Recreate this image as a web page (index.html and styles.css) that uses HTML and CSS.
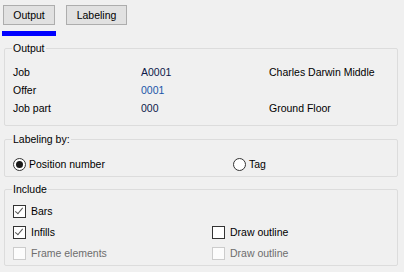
FILE: index.html
```html
<!DOCTYPE html>
<html lang="en">
<head>
    <meta charset="UTF-8">
    <title>Output settings</title>
    <link rel="stylesheet" href="styles.css">
</head>
<body>

    <div class="tabs">
        <div class="tab-item">
            <button class="tab-btn">Output</button>
            <div class="tab-mark"></div>
        </div>
        <div class="tab-item">
            <button class="tab-btn labeling">Labeling</button>
        </div>
    </div>

    <fieldset class="group group-output">
        <legend>Output</legend>
        <div class="info-grid">
            <span>Job</span><span class="value">A0001</span><span>Charles Darwin Middle</span>
            <span>Offer</span><span class="value link">0001</span><span></span>
            <span>Job part</span><span class="value">000</span><span>Ground Floor</span>
        </div>
    </fieldset>

    <fieldset class="group group-labeling">
        <legend>Labeling by:</legend>
        <div class="option-grid">
            <label class="option"><span class="radio checked"></span>Position number</label>
            <label class="option"><span class="radio"></span>Tag</label>
        </div>
    </fieldset>

    <fieldset class="group group-include">
        <legend>Include</legend>
        <div class="option-grid include-grid">
            <label class="option"><span class="check checked"></span>Bars</label>
            <span></span>
            <label class="option"><span class="check checked"></span>Infills</label>
            <label class="option"><span class="check"></span>Draw outline</label>
            <label class="option disabled"><span class="check"></span>Frame elements</label>
            <label class="option disabled"><span class="check"></span>Draw outline</label>
        </div>
    </fieldset>

</body>
</html>
```

FILE: styles.css
```css
body {
    margin: 0;
    background-color: #f0f0f0;
    font-family: "Liberation Sans", Arial, sans-serif;
    font-size: 10.5px;
    color: #000;
    width: 404px;
    height: 272px;
    overflow: hidden;
}

.tabs {
    display: flex;
    gap: 10px;
    padding: 5px 0 0 3px;
    height: 42px;
    box-sizing: border-box;
}

.tab-item {
    display: flex;
    flex-direction: column;
}

.tab-btn {
    height: 20px;
    width: 52px;
    padding: 0;
    margin: 0;
    background-color: #e1e1e1;
    border: 1px solid #adadad;
    font-family: inherit;
    font-size: 10.5px;
    color: #000;
}

.tab-btn.labeling {
    width: 61px;
}

.tab-mark {
    height: 5px;
    width: 54px;
    margin: 6px 0 0 -1px;
    background-color: #0000ff;
}

.group {
    margin: 0 6px 0 4px;
    border: 1px solid #dcdcdc;
    border-radius: 2px;
    padding: 8px;
}

.group legend {
    padding: 0 1px;
    margin-left: -1px;
    line-height: 13px;
}

.group-labeling {
    margin-top: 7px;
    padding-top: 9px;
    padding-bottom: 3px;
}

.group-include {
    margin-top: 6px;
    padding-top: 5px;
    padding-bottom: 1px;
}

.info-grid {
    display: grid;
    grid-template-columns: 128px 128px 1fr;
    grid-auto-rows: 18px;
    line-height: 18px;
}

.value {
    color: #0d1a4a;
}

.value.link {
    color: #1a55a8;
}

.option-grid {
    display: grid;
    grid-template-columns: 220px 1fr;
    grid-auto-rows: 18px;
    line-height: 18px;
}

.include-grid {
    grid-template-columns: 199px 1fr;
    grid-auto-rows: 21px;
    line-height: 21px;
}

.option {
    display: flex;
    align-items: center;
    gap: 3px;
}

.option.disabled {
    color: #6d6d6d;
}

.radio {
    width: 11px;
    height: 11px;
    border: 1px solid #333;
    border-radius: 50%;
    background-color: #fff;
    position: relative;
}

.radio.checked::after {
    content: "";
    position: absolute;
    left: 2px;
    top: 2px;
    width: 7px;
    height: 7px;
    border-radius: 50%;
    background-color: #1a1a1a;
}

.check {
    width: 11px;
    height: 11px;
    border: 1px solid #333;
    background-color: #fff;
    position: relative;
    margin-right: 2px;
}

.check.checked::after {
    content: "";
    position: absolute;
    left: 3px;
    top: 0px;
    width: 3px;
    height: 7px;
    border-right: 1px solid #555;
    border-bottom: 1px solid #555;
    transform: rotate(40deg);
}

.option.disabled .check {
    border-color: #cccccc;
    background-color: #fcfcfc;
}
```
